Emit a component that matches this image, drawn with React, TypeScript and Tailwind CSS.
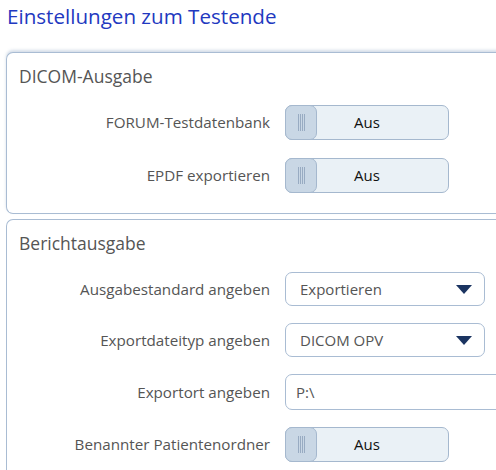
import React from 'react';

const font = { fontFamily: '"Open Sans", "Liberation Sans", sans-serif' };

const Toggle = ({ value }: { value: string }) => (
  <div className="relative flex h-[35px] w-[164px] items-center justify-center rounded-[7px] border border-[#a5b8ce] bg-[#eaf1f6]">
    <div className="absolute left-[-1px] top-[-1px] flex h-[35px] w-[32px] items-center justify-center rounded-[7px] border border-[#a5b8ce] bg-[#c9d7e5]">
      <div className="flex h-[17px] gap-[1px]">
        {[0, 1, 2, 3].map((i) => (
          <span key={i} className="block h-full w-[1px] bg-[#98abc2]" />
        ))}
      </div>
    </div>
    <span className="text-[15px] text-[#111]">{value}</span>
  </div>
);

const Select = ({ value }: { value: string }) => (
  <div className="flex h-[34px] w-[200px] items-center justify-between rounded-[7px] border border-[#a9bcd3] bg-white pl-[14px] pr-[12px]">
    <span className="text-[15px] text-[#555]">{value}</span>
    <svg width="16" height="9" viewBox="0 0 16 9">
      <polygon points="0,0 16,0 8,9" fill="#1b3461" />
    </svg>
  </div>
);

const Input = ({ value }: { value: string }) => (
  <div className="flex h-[36px] w-[240px] items-center rounded-l-[7px] border border-[#a9bcd3] bg-white pl-[10px]">
    <span className="text-[15px] text-[#555]">{value}</span>
  </div>
);

const Row = ({ label, children }: { label: string; children: React.ReactNode }) => (
  <div className="flex items-center">
    <div className="w-[263px] shrink-0 text-right text-[15.2px] text-[#555]">{label}</div>
    <div className="ml-[15px] shrink-0">{children}</div>
  </div>
);

const Panel = ({
  title,
  children,
  shadow,
  gap,
}: {
  title: string;
  children: React.ReactNode;
  shadow?: boolean;
  gap: string;
}) => (
  <section
    className={`ml-[6px] w-[520px] rounded-l-[7px] border border-r-0 border-[#a9bcd3] bg-white pb-[20px] pt-[11px] ${
      shadow ? 'shadow-[0_-2px_3px_rgba(160,180,205,0.45)]' : ''
    }`}
  >
    <h2 className="h-[24px] pl-[12px] text-[17.5px] leading-[24px] text-[#555]">{title}</h2>
    <div className={`mt-[17px] flex flex-col ${gap}`}>{children}</div>
  </section>
);

export default function App() {
  return (
    <div className="h-[470px] w-[496px] overflow-hidden bg-white" style={font}>
      <h1 className="h-[33px] pl-[7px] pt-[2px] text-[20.6px] leading-[28px] text-[#2238c0]">
        Einstellungen zum Testende
      </h1>
      <div className="mt-[19px]">
        <Panel title="DICOM-Ausgabe" shadow gap="gap-[18px]">
          <Row label="FORUM-Testdatenbank">
            <Toggle value="Aus" />
          </Row>
          <Row label="EPDF exportieren">
            <Toggle value="Aus" />
          </Row>
        </Panel>
      </div>
      <div className="mt-[5px]">
        <Panel title="Berichtausgabe" gap="gap-[17px]">
          <Row label="Ausgabestandard angeben">
            <Select value="Exportieren" />
          </Row>
          <Row label="Exportdateityp angeben">
            <Select value="DICOM OPV" />
          </Row>
          <Row label="Exportort angeben">
            <Input value="P:\" />
          </Row>
          <Row label="Benannter Patientenordner">
            <Toggle value="Aus" />
          </Row>
        </Panel>
      </div>
    </div>
  );
}
